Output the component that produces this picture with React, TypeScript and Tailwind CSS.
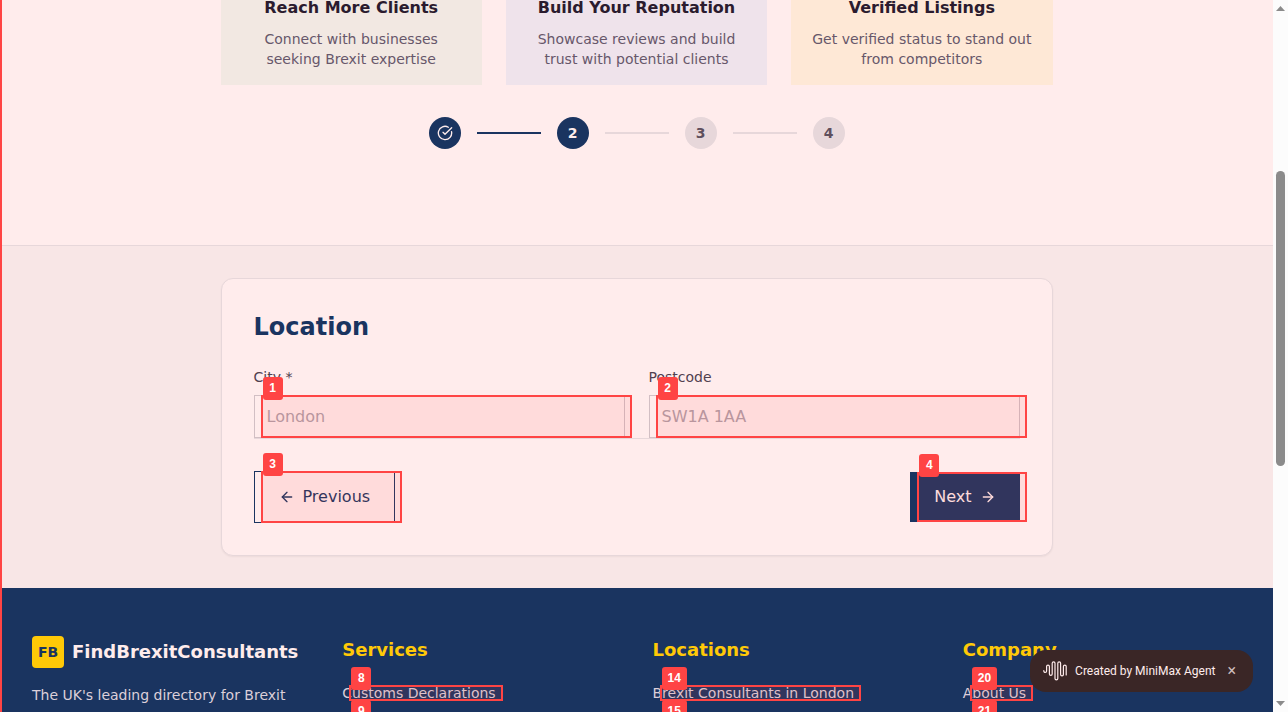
import React from "react";
import { ArrowLeft, ArrowRight, CircleCheckBig } from "lucide-react";

const benefits = [
  { title: "Reach More Clients", lines: ["Connect with businesses", "seeking Brexit expertise"], bg: "bg-[#f2e8e2]" },
  { title: "Build Your Reputation", lines: ["Showcase reviews and build", "trust with potential clients"], bg: "bg-[#efe3eb]" },
  { title: "Verified Listings", lines: ["Get verified status to stand out", "from competitors"], bg: "bg-[#fee8d6]" },
];

const columns = [
  { title: "Services", links: [{ n: 8, text: "Customs Declarations" }, { n: 9, text: "VAT & Tax Advice" }] },
  { title: "Locations", links: [{ n: 14, text: "Brexit Consultants in London" }, { n: 15, text: "Brexit Consultants in Manchester" }] },
  { title: "Company", links: [{ n: 20, text: "About Us" }, { n: 21, text: "Contact" }] },
];

function Marker({ n }: { n: number }) {
  return (
    <span className="pointer-events-none absolute inset-y-0 left-[7px] -right-[7px] border-2 border-[#ff4444] bg-[#ff4444]/10">
      <span className="absolute -top-5 left-0 min-w-5 rounded-[3px] bg-[#ff4444] px-1.5 py-1 text-center font-['Liberation_Sans',sans-serif] text-xs leading-[15px] font-bold text-white">
        {n}
      </span>
    </span>
  );
}

function Field({ id, label, placeholder, n }: { id: string; label: string; placeholder: string; n: number }) {
  return (
    <div>
      <label htmlFor={id} className="mb-2 block text-sm text-[#51404f]">{label}</label>
      <div className="relative">
        <input
          id={id}
          placeholder={placeholder}
          className="block h-[43px] w-full border border-[#d2bfc4] bg-transparent px-3 text-base text-[#2b1b2e] outline-none placeholder:text-[#b19fa8]"
        />
        <Marker n={n} />
      </div>
    </div>
  );
}

function Step({ children, active }: { children: React.ReactNode; active?: boolean }) {
  return (
    <li
      className={
        active
          ? "flex size-8 items-center justify-center rounded-full bg-[#1a3460] text-sm font-bold text-[#ffecec]"
          : "flex size-8 items-center justify-center rounded-full bg-[#e7d7da] text-sm font-bold text-[#5f4f5d]"
      }
    >
      {children}
    </li>
  );
}

function Scrollbar() {
  return (
    <div aria-hidden="true" className="flex w-[15px] shrink-0 flex-col items-center bg-[#fcfcfc] py-1.5">
      <svg width="9" height="5" viewBox="0 0 9 5" fill="#8b8b8b"><path d="M0 5 4.5 0 9 5Z" /></svg>
      <div className="flex w-full grow flex-col items-center">
        <div className="grow-[160]" />
        <div className="w-[9px] grow-[295] rounded-full bg-[#8b8b8b]" />
        <div className="grow-[235]" />
      </div>
      <svg width="9" height="5" viewBox="0 0 9 5" fill="#8b8b8b"><path d="M0 0 4.5 5 9 0Z" /></svg>
    </div>
  );
}

export default function App() {
  return (
    <div className="flex h-screen overflow-hidden bg-[#ffecec] font-['DejaVu_Sans',sans-serif]">
      <div className="relative min-w-0 grow overflow-hidden">
        <section className="border-b border-[#e7d7da] pb-24">
          <div className="mx-auto -mt-1.5 max-w-4xl px-8">
            <div className="grid grid-cols-3 gap-6">
              {benefits.map((b) => (
                <div key={b.title} className={`px-4 pb-4 text-center ${b.bg}`}>
                  <h3 className="mb-[7px] text-base leading-7 font-bold text-[#2b1b2e]">{b.title}</h3>
                  <p className="text-sm text-[#67576a]">
                    {b.lines[0]}
                    <br />
                    {b.lines[1]}
                  </p>
                </div>
              ))}
            </div>
            <ol className="mt-8 flex items-center justify-center gap-4">
              <Step active><CircleCheckBig size={16} strokeWidth={2} /></Step>
              <li aria-hidden="true" className="h-0.5 w-16 bg-[#1a3460]" />
              <Step active>2</Step>
              <li aria-hidden="true" className="h-0.5 w-16 bg-[#e7d7da]" />
              <Step>3</Step>
              <li aria-hidden="true" className="h-0.5 w-16 bg-[#e7d7da]" />
              <Step>4</Step>
            </ol>
          </div>
        </section>

        <section className="bg-[#f8e6e6] py-8">
          <div className="mx-auto max-w-4xl px-8">
            <form className="rounded-xl border border-[#e7d7da] bg-[#ffecec] p-8 shadow-xs">
              <h2 className="mb-6 text-2xl font-bold text-[#1a3460]">Location</h2>
              <div className="grid grid-cols-2 gap-6">
                <Field id="city" label="City *" placeholder="London" n={1} />
                <Field id="postcode" label="Postcode" placeholder="SW1A 1AA" n={2} />
              </div>
              <div className="flex items-center justify-between border-t border-[#e7d7da] pt-8">
                <div className="relative">
                  <button type="button" className="flex h-[52px] items-center gap-2 border border-[#1a3460] px-6 text-base text-[#1a3460]">
                    <ArrowLeft size={16} />
                    Previous
                  </button>
                  <Marker n={3} />
                </div>
                <div className="relative">
                  <button type="button" className="flex h-[50px] items-center gap-2 bg-[#1a3460] px-6 text-base text-[#ffecec]">
                    Next
                    <ArrowRight size={16} />
                  </button>
                  <Marker n={4} />
                </div>
              </div>
            </form>
          </div>
        </section>

        <footer className="bg-[#1a3460] pt-12">
          <div className="mx-auto grid max-w-7xl grid-cols-4 gap-8 px-8">
            <div>
              <div className="mb-4 flex items-center gap-2">
                <span className="flex size-8 shrink-0 items-center justify-center rounded bg-[#ffc907] text-sm font-bold text-[#1a3460]">FB</span>
                <span className="text-lg font-bold text-[#ffecec]">FindBrexitConsultants</span>
              </div>
              <p className="text-sm leading-[23px] text-[#dccfd9]">The UK's leading directory for Brexit consultants and advisors.</p>
            </div>
            {columns.map((c) => (
              <nav key={c.title} aria-label={c.title}>
                <h3 className="mb-[21px] text-lg font-bold text-[#ffc907]">{c.title}</h3>
                <ul className="flex flex-col gap-[17px]">
                  {c.links.map((l) => (
                    <li key={l.n} className="flex">
                      <a href="#" className="relative text-sm leading-4 text-[#dccfd9]">
                        {l.text}
                        <Marker n={l.n} />
                      </a>
                    </li>
                  ))}
                </ul>
              </nav>
            ))}
          </div>
        </footer>
        <div className="pointer-events-none absolute inset-y-0 left-0 w-0.5 bg-[#ff4444]" />

        <div className="absolute right-5 bottom-5 flex h-[42px] items-center gap-2 rounded-2xl bg-[#3a2626] pr-[17px] pl-[13px] font-[Roboto,sans-serif] text-xs text-[#ffecec]">
          <svg width="24" height="20" viewBox="0 0 24 20" fill="none" stroke="currentColor" strokeWidth="1.2" strokeLinecap="round">
            <path d="M.8 9.500v.6a1.400 1.400 0 0 0 2.800 0V5.500a1.400 1.400 0 0 1 2.800 0V13a1.400 1.400 0 0 0 2.800 0V2.200a1.400 1.400 0 0 1 2.800 0V17.500a1.400 1.400 0 0 0 2.800 0V2.200a1.400 1.400 0 0 1 2.800 0V13.500a1.400 1.400 0 0 0 2.800 0V5.500a1.400 1.400 0 0 1 2.800 0V14" />
          </svg>
          <span>Created by MiniMax Agent</span>
          <button type="button" aria-label="Close" className="ml-1 text-base text-[#cdbcbc]">×</button>
        </div>
      </div>
      <Scrollbar />
    </div>
  );
}
